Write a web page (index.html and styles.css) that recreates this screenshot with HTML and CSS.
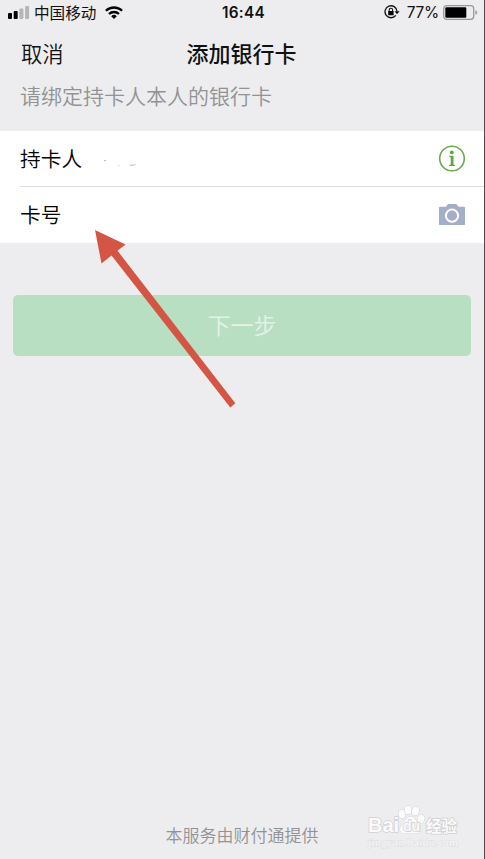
FILE: index.html
```html
<!DOCTYPE html>
<html lang="zh-CN">
<head>
<meta charset="utf-8">
<title>添加银行卡</title>
<link rel="stylesheet" href="styles.css">
</head>
<body>
<div class="screen">
  <header class="status">
    <div class="status-left">
      <svg class="signal" width="22" height="13" viewBox="0 0 22 13"><rect x="0" y="7" width="4" height="6" rx="1"/><rect x="5.7" y="5" width="4" height="8" rx="1"/><g fill="#b5b5b7"><rect x="11.4" y="2.5" width="4" height="10.5" rx="1"/><rect x="17.1" y="0" width="4" height="13" rx="1"/></g></svg>
      <span class="carrier">中国移动</span>
      <svg class="wifi" width="18" height="13" viewBox="0 0 18 13"><g fill="none" stroke="#000" stroke-width="2.3"><path d="M.9 4.8a11.6 11.6 0 0 1 16.2 0"/><path d="M4 8a7.2 7.2 0 0 1 10 0"/></g><path d="M9 13 6.2 10.2a4 4 0 0 1 5.6 0Z"/></svg>
    </div>
    <time class="clock">16:44</time>
    <div class="status-right">
      <svg class="lock" width="16" height="14" viewBox="0 0 16 14"><path d="M11.8 10.4A6 6 0 1 1 13 6.2" fill="none" stroke="#111" stroke-width="1.3"/><path d="M10.6 6.2h5L13 9.2Z"/><rect x="4.2" y="6.100" width="5.4" height="4.2" rx=".5"/><path d="M5.2 6.5V5a1.7 1.7 0 0 1 3.4 0v1.5" fill="none" stroke="#111" stroke-width="1.1"/></svg>
      <span class="percent">77%</span>
      <svg class="battery" width="35" height="15" viewBox="0 0 35 15"><rect x=".7" y=".7" width="30" height="13.6" rx="3" fill="none" stroke="#98989a" stroke-width="1.3"/><rect x="2.3" y="2.3" width="21" height="10.4" rx="1"/><path d="M32.4 5.2q1.8.6 1.8 2.3t-1.8 2.3Z" fill="#98989a"/></svg>
    </div>
  </header>
  <nav class="nav"><span class="cancel">取消</span><h1 class="title">添加银行卡</h1><span></span></nav>
  <p class="hint">请绑定持卡人本人的银行卡</p>
  <main>
    <section class="form">
      <div class="row">
        <span>持卡人</span>
        <svg class="smudge" width="36" height="14" viewBox="0 0 36 14"><path d="M1 8.5h2" stroke="#bbb"/><path d="M15 13.5h2" stroke="#e4e4e4"/><path d="M26.500 13.2h4.5l1.500-.8" fill="none" stroke="#bbb"/></svg>
        <svg class="row-icon" width="28" height="28" viewBox="0 0 28 28"><circle cx="14" cy="13.500" r="12.3" fill="none" stroke="#69aa50" stroke-width="1.6"/><circle cx="13.8" cy="7.4" r="1.9" fill="#61a545"/><path d="M11 10.700h4.5v8.9l1.600.5v.9H10.900v-.9l1.800-.5v-7.500l-1.700-.5Z" fill="#61a545"/></svg>
      </div>
      <div class="row second">
        <span>卡号</span>
        <svg class="row-icon" width="28" height="28" viewBox="0 0 28 28"><path d="M2 5.8h5.8l2.4-2.7h8l2.4 2.7H26.200q.8 0 .8.8v16.6q0 .8-.8.8H1.800q-.8 0-.8-.8V6.600q0-.8 1-.8Z" fill="#a3aecb"/><circle cx="14" cy="14.7" r="6.1" fill="none" stroke="#fff" stroke-width="2"/></svg>
      </div>
    </section>
    <button class="next">下一步</button>
  </main>
  <footer class="provider">本服务由财付通提供</footer>
  <svg class="arrow" width="145" height="181" viewBox="0 0 145 181"><path d="M4 3 34.5 17.5 26.5 23.7 144.3 176.2 139.3 180.5 20.5 28.4 10.5 36.5Z" fill="#d45544"/></svg>
  <div class="watermark">
    <div class="mark"><span class="latin">Bai</span><span class="cn">经验</span></div>
    <div class="domain">jingyan.baidu.com</div>
    <svg class="paw" width="30" height="30" viewBox="0 0 30 30"><g fill="#fbfbfc" stroke="#cfcfd1" stroke-width=".9"><ellipse cx="5" cy="9" rx="3.4" ry="4.2" transform="rotate(-12 5 9)"/><ellipse cx="11" cy="5" rx="3.5" ry="4.3"/><ellipse cx="18.500" cy="6" rx="3.500" ry="4.400" transform="rotate(12 18.500 6)"/><ellipse cx="24" cy="14" rx="3.500" ry="4.300" transform="rotate(18 24 14)"/><path d="M13.500 11.500c4 0 5 3.500 7.500 6.500 3.500 4 3.500 10.500-2 10.500H7.500c-5.500 0-5.500-6.500-2-10 3-3 4.500-7 8-7Z"/></g></svg>
    <span class="paw-text">du</span>
  </div>
</div>
</body>
</html>
```
FILE: styles.css
```css
* { box-sizing: border-box; }
body { margin: 0; background: #ededef; font-family: "Noto Sans CJK SC", sans-serif; color: #111; }
.screen { position: relative; display: flex; flex-direction: column; width: 485px; height: 859px; border-right: 1px solid #4b4b4d; overflow: hidden; }
.status { display: grid; grid-template-columns: 1fr auto 1fr; align-items: center; height: 25px; padding: 0 6px 0 8px; font-size: 15.6px; line-height: 24px; }
.status-left, .status-right { display: flex; align-items: center; }
.status-right { justify-content: flex-end; }
.carrier { margin-left: 4px; line-height: 22px; padding-bottom: 2px; }
.wifi { margin-left: 9px; }
.clock { padding-left: 1px; font: 600 15.3px/24px Inter, sans-serif; letter-spacing: .3px; }
.percent { margin: 0 4px 0 7px; font: 400 15.5px/24px Inter, sans-serif; letter-spacing: -.3px; }
.lock { margin-bottom: 1px; }
.nav { display: grid; grid-template-columns: 1fr auto 1fr; align-items: center; height: 54px; padding: 0 22px 0 21px; }
.cancel { font-size: 21.3px; font-weight: 350; }
.title { margin: 0; font-size: 22px; font-weight: 500; }
.hint { height: 52px; margin: 0; padding: 1px 0 0 20px; color: #929294; font-size: 21px; font-weight: 350; line-height: 30px; }
.form { height: 112px; background: #fff; }
.row { display: flex; align-items: center; height: 55px; margin-left: 20px; padding-right: 18px; font-size: 20.7px; color: #000; font-weight: 350; }
.row > span { padding-bottom: 1px; }
.second { height: 57px; border-top: 1px solid #dedee0; }
.second > span { padding-bottom: 2px; }
.smudge { margin-left: 21px; }
.row-icon { margin-left: auto; }
.next { display: block; width: 458px; height: 61px; margin: 52px 0 0 13px; padding: 0 0 2px; border: 0; border-radius: 5px; background: #b9dfc3; color: #e3f2e7; font: 350 23px/59px "Noto Sans CJK SC", sans-serif; }
.provider { margin-top: auto; height: 38px; text-align: center; color: #929294; font-size: 17px; line-height: 27px; font-weight: 350; }
.arrow { position: absolute; left: 91px; top: 227px; }
.watermark { position: absolute; left: 368px; top: 805px; width: 95px; height: 48px; color: #fafafb; -webkit-text-stroke: 1.5px #d0d0d2; paint-order: stroke fill; }
.mark { display: flex; justify-content: space-between; width: 89px; height: 30px; align-items: flex-end; line-height: 20px; font-weight: 700; }
.latin { font: 700 20px/20px "Liberation Sans", sans-serif; }
.cn { font-size: 15.5px; }
.domain { font: 11px/14px "Liberation Serif", serif; letter-spacing: .5px; -webkit-text-stroke: 1px #dcdcde; }
.paw { position: absolute; left: 29px; top: 0; }
.paw-text { position: absolute; left: 35px; top: 12px; font: 700 14px/18px "Liberation Sans", sans-serif; }
```
